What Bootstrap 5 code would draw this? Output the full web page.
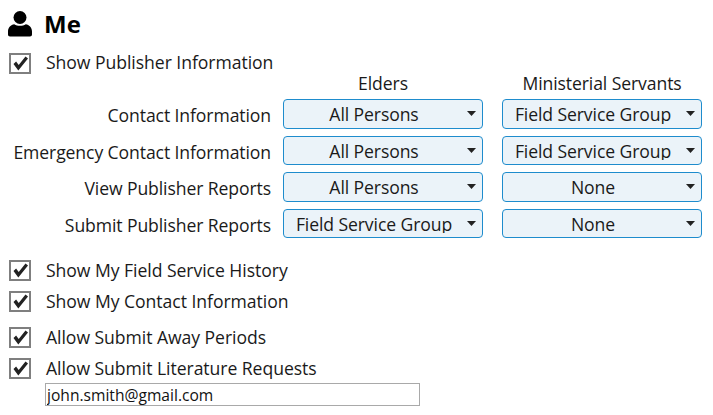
<!DOCTYPE html>
<html lang="en"><head><meta charset="utf-8"><title>Me</title>
<link href="https://cdn.jsdelivr.net/npm/bootstrap@5.3.0/dist/css/bootstrap.min.css" rel="stylesheet">
<style>
html,body{height:100%;overflow:hidden;background:#fff}
body{font-family:"Open Sans","Noto Sans",sans-serif;font-size:17.6px;color:#1a1a1a;line-height:1.2}
.sheet{padding:12px 0 0 9px;width:713px}
.head-row{height:24px;margin-left:-1px}
.head-title{font-size:24px;font-weight:700;margin-left:12px;color:#000;line-height:24px}
.chk-row{display:flex;align-items:center;height:20px}
.gap-first{margin-top:17px}
.gap-section{margin-top:15px}
.gap-near{margin-top:11px}
.gap-far{margin-top:16px}
.chk-box{appearance:none;width:22px;height:21px;margin:0;flex:none;border:2px solid #7f7f7f;background:#fff url("data:image/svg+xml,%3Csvg xmlns='http://www.w3.org/2000/svg' viewBox='0 0 17 17'%3E%3Cpath d='M1.500 9l2.600-2.400 2.600 3.400L13.500 1.500l2.500 2L6.300 15.500z' fill='%23222'/%3E%3C/svg%3E") center/17px 17px no-repeat}
.chk-text{margin-left:15px;white-space:nowrap;letter-spacing:-.05px}
.matrix{display:grid;grid-template-columns:262px 212px 219px}
.cell-h{text-align:center;height:26px;line-height:20px;white-space:nowrap;letter-spacing:-.1px}
.cell-l{text-align:right;line-height:32px;white-space:nowrap;letter-spacing:-.1px}
.sel-wrap{padding-left:12px}
.sel-wrap+.sel-wrap{padding-left:19px}
.pick{height:29.600px;padding:2px 24px 0 6px;margin-bottom:7px;width:200px;border:1px solid #1e8ccd;border-radius:4px;background:#ebf3f9 url("data:image/svg+xml,%3Csvg xmlns='http://www.w3.org/2000/svg' viewBox='0 0 9 5'%3E%3Cpath d='M0 0h9L4.500 5z' fill='%23222'/%3E%3C/svg%3E") right 6px center/9px 5px no-repeat;font-size:17.6px;line-height:1;color:#1a1a1a;text-align:center;letter-spacing:-.1px}
.mail{display:block;width:375px;height:23px;margin:5px 0 0 36px;padding:0 1px;border:1px solid #a9a9a9;border-radius:0;font-size:15.6px;line-height:21px;color:#111;background:#fff}
</style></head>
<body>
<div class="sheet">
 <div class="head-row d-flex align-items-center">
  <svg width="24" height="26" viewBox="0 0 24 26"><circle cx="12" cy="6.500" r="6.500" fill="#000"/><path d="M2 25.500c-1.200 0-2-.8-2-2v-3c0-4 3-7 6.200-7.300 1.700 1 3.700 1.500 5.800 1.500s4.100-.5 5.800-1.500c3.200.3 6.200 3.300 6.200 7.300v3c0 1.200-.8 2-2 2z" fill="#000"/></svg>
  <span class="head-title">Me</span>
 </div>
 <div class="chk-row gap-first"><input type="checkbox" class="chk-box" checked aria-label="Show Publisher Information"><span class="chk-text">Show Publisher Information</span></div>
 <div class="matrix">
  <div></div><div class="cell-h sel-wrap">Elders</div><div class="cell-h sel-wrap">Ministerial Servants</div>
  <div class="cell-l">Contact Information</div>
  <div class="sel-wrap"><select class="form-select pick"><option>All Persons</option></select></div>
  <div class="sel-wrap"><select class="form-select pick"><option>Field Service Group</option></select></div>
  <div class="cell-l">Emergency Contact Information</div>
  <div class="sel-wrap"><select class="form-select pick"><option>All Persons</option></select></div>
  <div class="sel-wrap"><select class="form-select pick"><option>Field Service Group</option></select></div>
  <div class="cell-l">View Publisher Reports</div>
  <div class="sel-wrap"><select class="form-select pick"><option>All Persons</option></select></div>
  <div class="sel-wrap"><select class="form-select pick"><option>None</option></select></div>
  <div class="cell-l">Submit Publisher Reports</div>
  <div class="sel-wrap"><select class="form-select pick"><option>Field Service Group</option></select></div>
  <div class="sel-wrap"><select class="form-select pick"><option>None</option></select></div>
 </div>
 <div class="chk-row gap-section"><input type="checkbox" class="chk-box" checked aria-label="Show My Field Service History"><span class="chk-text">Show My Field Service History</span></div>
 <div class="chk-row gap-near"><input type="checkbox" class="chk-box" checked aria-label="Show My Contact Information"><span class="chk-text">Show My Contact Information</span></div>
 <div class="chk-row gap-far"><input type="checkbox" class="chk-box" checked aria-label="Allow Submit Away Periods"><span class="chk-text">Allow Submit Away Periods</span></div>
 <div class="chk-row gap-near"><input type="checkbox" class="chk-box" checked aria-label="Allow Submit Literature Requests"><span class="chk-text">Allow Submit Literature Requests</span></div>
 <input class="form-control mail" value="john.smith@gmail.com" aria-label="Email">
</div>
<script src="https://cdn.jsdelivr.net/npm/bootstrap@5.3.0/dist/js/bootstrap.bundle.min.js"></script>
</body></html>
